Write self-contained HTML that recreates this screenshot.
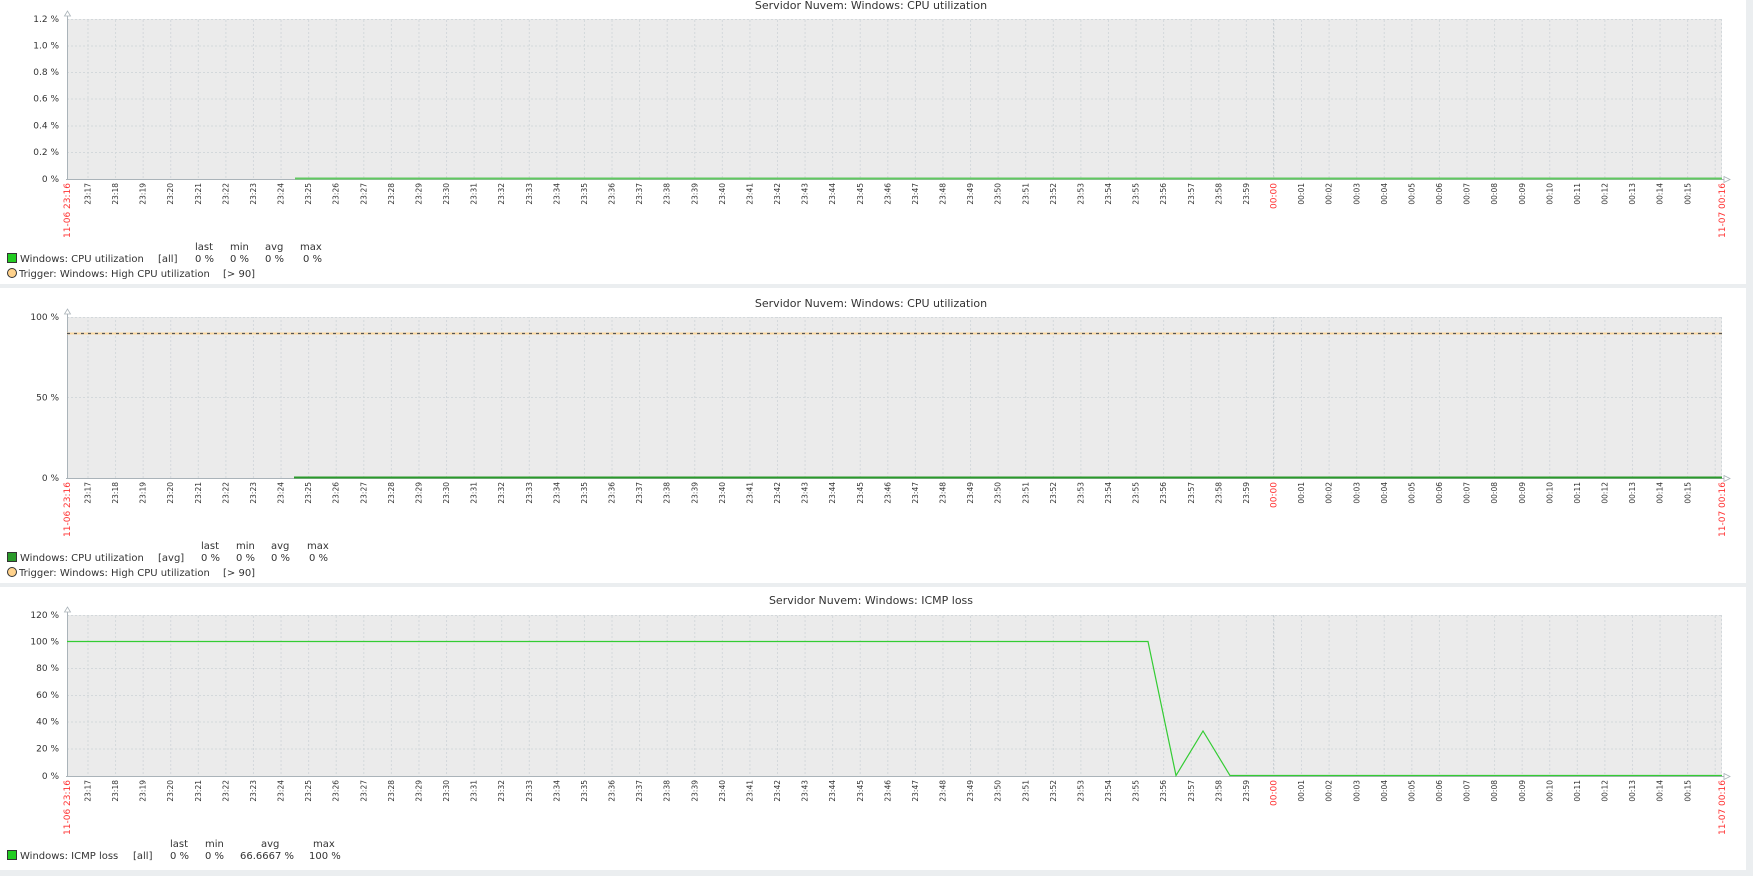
<!DOCTYPE html>
<html><head><meta charset="utf-8"><style>
html,body{margin:0;padding:0;background:#fff;width:1753px;height:876px;overflow:hidden}
svg{display:block}
text{font-family:"DejaVu Sans","Liberation Sans",sans-serif;fill:#333}
.t{font-size:11px;text-anchor:middle}
.y{font-size:9px;text-anchor:end}
.k{font-size:7.5px;text-anchor:end}
.r{font-size:9px;text-anchor:end;fill:#f33}
.l{font-size:10px}
</style></head><body>
<svg width="1753" height="876" viewBox="0 0 1753 876" xmlns="http://www.w3.org/2000/svg">
<defs>
<pattern id="vg" patternUnits="userSpaceOnUse" x="87.5" y="0" width="27.58" height="4">
<rect x="0" y="0" width="1" height="2" fill="#d3d8db"/>
</pattern>
<g id="ticks">
<text class="r" transform="translate(70,3) rotate(-90)">11-06 23:16</text>
<text class="k" transform="translate(90.5,3) rotate(-90)">23:17</text>
<text class="k" transform="translate(118.1,3) rotate(-90)">23:18</text>
<text class="k" transform="translate(145.7,3) rotate(-90)">23:19</text>
<text class="k" transform="translate(173.2,3) rotate(-90)">23:20</text>
<text class="k" transform="translate(200.8,3) rotate(-90)">23:21</text>
<text class="k" transform="translate(228.4,3) rotate(-90)">23:22</text>
<text class="k" transform="translate(256,3) rotate(-90)">23:23</text>
<text class="k" transform="translate(283.6,3) rotate(-90)">23:24</text>
<text class="k" transform="translate(311.1,3) rotate(-90)">23:25</text>
<text class="k" transform="translate(338.7,3) rotate(-90)">23:26</text>
<text class="k" transform="translate(366.3,3) rotate(-90)">23:27</text>
<text class="k" transform="translate(393.9,3) rotate(-90)">23:28</text>
<text class="k" transform="translate(421.5,3) rotate(-90)">23:29</text>
<text class="k" transform="translate(449.1,3) rotate(-90)">23:30</text>
<text class="k" transform="translate(476.6,3) rotate(-90)">23:31</text>
<text class="k" transform="translate(504.2,3) rotate(-90)">23:32</text>
<text class="k" transform="translate(531.8,3) rotate(-90)">23:33</text>
<text class="k" transform="translate(559.4,3) rotate(-90)">23:34</text>
<text class="k" transform="translate(587,3) rotate(-90)">23:35</text>
<text class="k" transform="translate(614.6,3) rotate(-90)">23:36</text>
<text class="k" transform="translate(642.1,3) rotate(-90)">23:37</text>
<text class="k" transform="translate(669.7,3) rotate(-90)">23:38</text>
<text class="k" transform="translate(697.3,3) rotate(-90)">23:39</text>
<text class="k" transform="translate(724.9,3) rotate(-90)">23:40</text>
<text class="k" transform="translate(752.5,3) rotate(-90)">23:41</text>
<text class="k" transform="translate(780,3) rotate(-90)">23:42</text>
<text class="k" transform="translate(807.6,3) rotate(-90)">23:43</text>
<text class="k" transform="translate(835.2,3) rotate(-90)">23:44</text>
<text class="k" transform="translate(862.8,3) rotate(-90)">23:45</text>
<text class="k" transform="translate(890.4,3) rotate(-90)">23:46</text>
<text class="k" transform="translate(918,3) rotate(-90)">23:47</text>
<text class="k" transform="translate(945.5,3) rotate(-90)">23:48</text>
<text class="k" transform="translate(973.1,3) rotate(-90)">23:49</text>
<text class="k" transform="translate(1000.7,3) rotate(-90)">23:50</text>
<text class="k" transform="translate(1028.3,3) rotate(-90)">23:51</text>
<text class="k" transform="translate(1055.9,3) rotate(-90)">23:52</text>
<text class="k" transform="translate(1083.5,3) rotate(-90)">23:53</text>
<text class="k" transform="translate(1111,3) rotate(-90)">23:54</text>
<text class="k" transform="translate(1138.6,3) rotate(-90)">23:55</text>
<text class="k" transform="translate(1166.2,3) rotate(-90)">23:56</text>
<text class="k" transform="translate(1193.8,3) rotate(-90)">23:57</text>
<text class="k" transform="translate(1221.4,3) rotate(-90)">23:58</text>
<text class="k" transform="translate(1248.9,3) rotate(-90)">23:59</text>
<text class="r" transform="translate(1276.5,3) rotate(-90)">00:00</text>
<text class="k" transform="translate(1304.1,3) rotate(-90)">00:01</text>
<text class="k" transform="translate(1331.7,3) rotate(-90)">00:02</text>
<text class="k" transform="translate(1359.3,3) rotate(-90)">00:03</text>
<text class="k" transform="translate(1386.9,3) rotate(-90)">00:04</text>
<text class="k" transform="translate(1414.4,3) rotate(-90)">00:05</text>
<text class="k" transform="translate(1442,3) rotate(-90)">00:06</text>
<text class="k" transform="translate(1469.6,3) rotate(-90)">00:07</text>
<text class="k" transform="translate(1497.2,3) rotate(-90)">00:08</text>
<text class="k" transform="translate(1524.8,3) rotate(-90)">00:09</text>
<text class="k" transform="translate(1552.4,3) rotate(-90)">00:10</text>
<text class="k" transform="translate(1579.9,3) rotate(-90)">00:11</text>
<text class="k" transform="translate(1607.5,3) rotate(-90)">00:12</text>
<text class="k" transform="translate(1635.1,3) rotate(-90)">00:13</text>
<text class="k" transform="translate(1662.7,3) rotate(-90)">00:14</text>
<text class="k" transform="translate(1690.3,3) rotate(-90)">00:15</text>
<text class="r" transform="translate(1725,3) rotate(-90)">11-07 00:16</text>
</g>
</defs>
<rect x="1746" y="0" width="7" height="876" fill="#ebeef0"/>
<rect x="0" y="284" width="1746" height="4" fill="#ebeef0"/>
<rect x="0" y="583" width="1746" height="4" fill="#ebeef0"/>
<rect x="0" y="870" width="1746" height="6" fill="#ebeef0"/>

<!-- CHART 1 -->
<text class="t" x="871" y="9">Servidor Nuvem: Windows: CPU utilization</text>
<rect x="67" y="19" width="1655" height="160" fill="#ebebeb"/>
<rect x="67" y="19" width="1655" height="160" fill="url(#vg)"/>
<g stroke="#d3d8db" stroke-dasharray="2,2" stroke-width="1">
<line x1="67" y1="19.5" x2="1722" y2="19.5"/><line x1="67" y1="46" x2="1722" y2="46"/><line x1="67" y1="72.5" x2="1722" y2="72.5"/><line x1="67" y1="99" x2="1722" y2="99"/><line x1="67" y1="126" x2="1722" y2="126"/><line x1="67" y1="152.5" x2="1722" y2="152.5"/>
<line x1="1721.5" y1="19" x2="1721.5" y2="179"/>
</g>
<line x1="1273.5" y1="19" x2="1273.5" y2="179" stroke="#c9cfd3" stroke-dasharray="2,2"/>
<line x1="67.5" y1="12" x2="67.5" y2="180" stroke="#aab3b9"/>
<line x1="66" y1="179.5" x2="1728" y2="179.5" stroke="#aab3b9"/>
<path d="M64.5 16 L67.5 11 L70.5 16 Z" fill="#fff" stroke="#aab3b9" stroke-width="0.8"/>
<path d="M1724 176.5 L1730 179.5 L1724 182.5 Z" fill="#fff" stroke="#aab3b9" stroke-width="0.8"/>
<line x1="295" y1="178.5" x2="1722" y2="178.5" stroke="#60c860" stroke-width="2"/>
<g>
<text class="y" x="59" y="22">1.2 %</text><text class="y" x="59" y="48.5">1.0 %</text><text class="y" x="59" y="75">0.8 %</text><text class="y" x="59" y="101.5">0.6 %</text><text class="y" x="59" y="128.5">0.4 %</text><text class="y" x="59" y="155">0.2 %</text><text class="y" x="59" y="182">0 %</text>
</g>
<use href="#ticks" transform="translate(0,180)"/>
<g>
<text class="l" x="195" y="250">last</text><text class="l" x="230" y="250">min</text><text class="l" x="265" y="250">avg</text><text class="l" x="300" y="250">max</text>
<rect x="7.5" y="253.5" width="9" height="9" fill="#22cc22" stroke="#333"/>
<text class="l" x="20" y="262">Windows: CPU utilization</text><text class="l" x="158" y="262">[all]</text>
<text class="l" x="195" y="262">0 %</text><text class="l" x="230" y="262">0 %</text><text class="l" x="265" y="262">0 %</text><text class="l" x="303" y="262">0 %</text>
<circle cx="12" cy="273" r="4.5" fill="#ffd28c" stroke="#333"/>
<text class="l" x="19" y="277">Trigger: Windows: High CPU utilization</text><text class="l" x="223" y="277">[&gt; 90]</text>
</g>

<!-- CHART 2 -->
<text class="t" x="871" y="307">Servidor Nuvem: Windows: CPU utilization</text>
<rect x="67" y="317" width="1655" height="161" fill="#ebebeb"/>
<rect x="67" y="317" width="1655" height="161" fill="url(#vg)"/>
<g stroke="#d3d8db" stroke-dasharray="2,2">
<line x1="67" y1="317.5" x2="1722" y2="317.5"/><line x1="67" y1="397.5" x2="1722" y2="397.5"/><line x1="1721.5" y1="317" x2="1721.5" y2="478"/>
</g>
<line x1="1273.5" y1="317" x2="1273.5" y2="478" stroke="#c9cfd3" stroke-dasharray="2,2"/>
<line x1="67.5" y1="310" x2="67.5" y2="479" stroke="#aab3b9"/>
<line x1="66" y1="478.5" x2="1728" y2="478.5" stroke="#aab3b9"/>
<path d="M64.5 314 L67.5 309 L70.5 314 Z" fill="#fff" stroke="#aab3b9" stroke-width="0.8"/>
<path d="M1724 475.5 L1730 478.5 L1724 481.5 Z" fill="#fff" stroke="#aab3b9" stroke-width="0.8"/>
<line x1="67" y1="333.5" x2="1722" y2="333.5" stroke="#fcd9a0" stroke-width="2"/>
<line x1="67" y1="333.5" x2="1722" y2="333.5" stroke="#555" stroke-width="1.3" stroke-dasharray="3,4"/>
<line x1="294" y1="477.5" x2="1722" y2="477.5" stroke="#2a9a2a" stroke-width="2"/>
<text class="y" x="59" y="320">100 %</text><text class="y" x="59" y="400.5">50 %</text><text class="y" x="59" y="481">0 %</text>
<use href="#ticks" transform="translate(0,479)"/>
<g>
<text class="l" x="201" y="549">last</text><text class="l" x="236" y="549">min</text><text class="l" x="271" y="549">avg</text><text class="l" x="307" y="549">max</text>
<rect x="7.5" y="552.5" width="9" height="9" fill="#2a9a2a" stroke="#333"/>
<text class="l" x="20" y="561">Windows: CPU utilization</text><text class="l" x="158" y="561">[avg]</text>
<text class="l" x="201" y="561">0 %</text><text class="l" x="236" y="561">0 %</text><text class="l" x="271" y="561">0 %</text><text class="l" x="309" y="561">0 %</text>
<circle cx="12" cy="572" r="4.5" fill="#ffd28c" stroke="#333"/>
<text class="l" x="19" y="576">Trigger: Windows: High CPU utilization</text><text class="l" x="223" y="576">[&gt; 90]</text>
</g>

<!-- CHART 3 -->
<text class="t" x="871" y="604">Servidor Nuvem: Windows: ICMP loss</text>
<rect x="67" y="615" width="1655" height="161" fill="#ebebeb"/>
<rect x="67" y="615" width="1655" height="161" fill="url(#vg)"/>
<g stroke="#d3d8db" stroke-dasharray="2,2">
<line x1="67" y1="615.5" x2="1722" y2="615.5"/><line x1="67" y1="668.5" x2="1722" y2="668.5"/><line x1="67" y1="695.5" x2="1722" y2="695.5"/><line x1="67" y1="722" x2="1722" y2="722"/><line x1="67" y1="749" x2="1722" y2="749"/><line x1="1721.5" y1="615" x2="1721.5" y2="776"/>
</g>
<line x1="1273.5" y1="615" x2="1273.5" y2="776" stroke="#c9cfd3" stroke-dasharray="2,2"/>
<line x1="67.5" y1="608" x2="67.5" y2="777" stroke="#aab3b9"/>
<line x1="66" y1="776.5" x2="1728" y2="776.5" stroke="#aab3b9"/>
<path d="M64.5 612 L67.5 607 L70.5 612 Z" fill="#fff" stroke="#aab3b9" stroke-width="0.8"/>
<path d="M1724 773.5 L1730 776.5 L1724 779.5 Z" fill="#fff" stroke="#aab3b9" stroke-width="0.8"/>
<polyline points="67,641.5 1148,641.5 1176,775.5 1203,731 1230,775.5 1722,775.5" fill="none" stroke="#33cc33" stroke-width="1.2"/>
<text class="y" x="59" y="618">120 %</text><text class="y" x="59" y="644.5">100 %</text><text class="y" x="59" y="671">80 %</text><text class="y" x="59" y="698">60 %</text><text class="y" x="59" y="724.5">40 %</text><text class="y" x="59" y="751.5">20 %</text><text class="y" x="59" y="779">0 %</text>
<use href="#ticks" transform="translate(0,777)"/>
<g>
<text class="l" x="170" y="847">last</text><text class="l" x="205" y="847">min</text><text class="l" x="261" y="847">avg</text><text class="l" x="313" y="847">max</text>
<rect x="7.5" y="850.5" width="9" height="9" fill="#22cc22" stroke="#333"/>
<text class="l" x="20" y="859">Windows: ICMP loss</text><text class="l" x="133" y="859">[all]</text>
<text class="l" x="170" y="859">0 %</text><text class="l" x="205" y="859">0 %</text><text class="l" x="240" y="859">66.6667 %</text><text class="l" x="309" y="859">100 %</text>
</g>
</svg>
</body></html>
